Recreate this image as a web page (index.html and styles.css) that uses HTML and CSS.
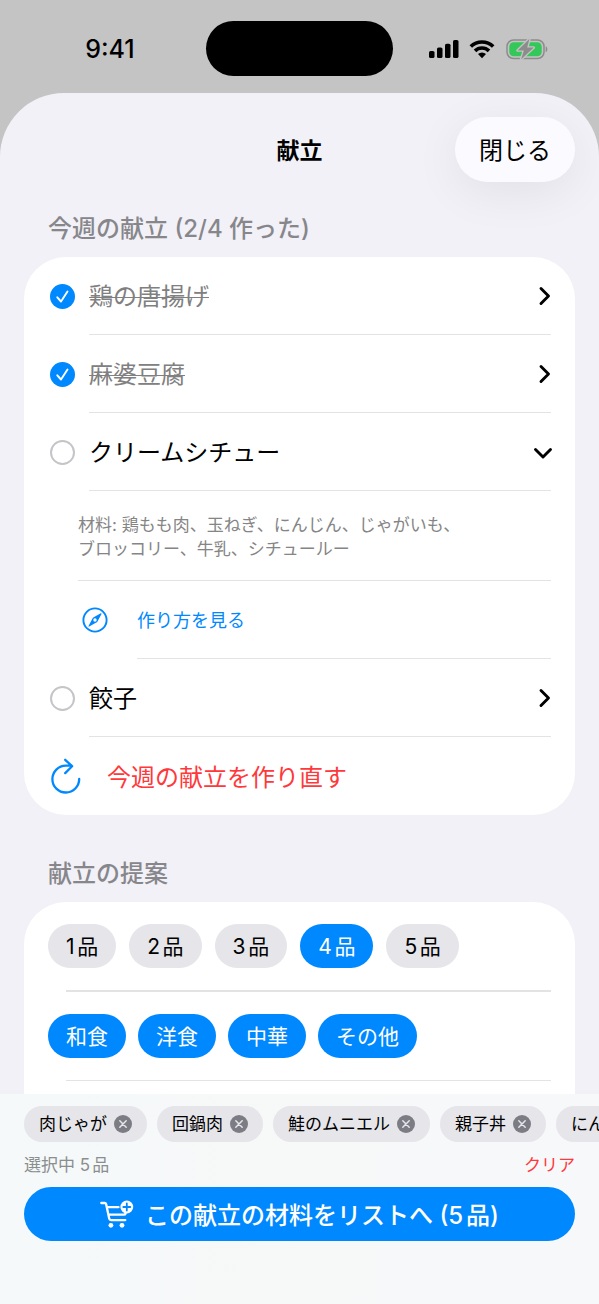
FILE: index.html
```html
<!DOCTYPE html>
<html lang="ja">
<head>
<meta charset="utf-8">
<meta name="viewport" content="width=device-width, initial-scale=1">
<title>献立</title>
<link rel="stylesheet" href="styles.css">
</head>
<body class="screen">
<div class="status">
  <div class="status-side"><span class="clock">9:41</span></div>
  <div class="island"></div>
  <div class="status-side status-icons">
    <svg width="30" height="20" viewBox="0 0 30 20" aria-hidden="true"><rect x="0" y="12" width="5.500" height="7" rx="1.6"/><rect x="8" y="8.500" width="5.500" height="10.500" rx="1.6"/><rect x="16" y="4.700" width="5.500" height="14.300" rx="1.6"/><rect x="24" y="1" width="5.500" height="18" rx="1.6"/></svg>
    <svg width="26" height="20" viewBox="0 0 26 20" aria-hidden="true"><g fill="none" stroke="#000" stroke-width="3.6"><path d="M1.800 7.500a16 16 0 0 1 22.400 0"/><path d="M6 11.900a10 10 0 0 1 14 0"/></g><path d="M13 19.200l-4-4.100a5.700 5.700 0 0 1 8 0z"/></svg>
    <svg class="battery" width="42" height="22" viewBox="0 0 42 22" aria-hidden="true"><rect x="1" y="2" width="37" height="18.500" rx="6.500" fill="none" stroke="#8c8c8c" stroke-width="1.500"/><rect x="3.300" y="4.300" width="32.400" height="14" rx="4.300" fill="#34c759"/><path d="M39.700 8.200c2.200.8 2.200 5.200 0 6z" fill="#8c8c8c"/><path d="M23.500 .8L11.600 12.500h6.300l-2.900 9L27.800 9.600h-6.600z" fill="#8c8c8c" stroke="#c4c4c4" stroke-width="2.600" stroke-linejoin="round" paint-order="stroke"/></svg>
  </div>
</div>

<main class="sheet">
  <header class="toolbar">
    <h1 class="title">献立</h1>
    <button class="close" type="button">閉じる</button>
  </header>

  <h2 class="section-title">今週の献立 (2/4 作った)</h2>
  <ul class="card">
    <li class="row">
      <input class="tick" type="checkbox" id="m1" checked>
      <div class="row-body"><label class="dish" for="m1">鶏の唐揚げ</label>
        <button class="toggle" type="button" aria-label="開く"><svg width="20" height="20" viewBox="0 0 20 20"><path d="M10 2.500l7.500 7.500-7.500 7.500"/></svg></button></div>
    </li>
    <li class="row">
      <input class="tick" type="checkbox" id="m2" checked>
      <div class="row-body"><label class="dish" for="m2">麻婆豆腐</label>
        <button class="toggle" type="button" aria-label="開く"><svg width="20" height="20" viewBox="0 0 20 20"><path d="M10 2.500l7.500 7.500-7.500 7.500"/></svg></button></div>
    </li>
    <li class="row">
      <input class="tick" type="checkbox" id="m3">
      <div class="row-body"><label class="dish" for="m3">クリームシチュー</label>
        <button class="toggle" type="button" aria-label="閉じる"><svg width="20" height="20" viewBox="0 0 20 20"><path d="M4.500 7.500l7.500 7.500 7.500-7.500"/></svg></button></div>
    </li>
    <li class="row row-note">
      <div class="row-body"><p class="note">材料: 鶏もも肉、玉ねぎ、にんじん、じゃがいも、<br>ブロッコリー、牛乳、シチュールー</p></div>
    </li>
    <li class="row row-link">
      <svg class="compass" width="26" height="26" viewBox="0 0 26 26" aria-hidden="true"><circle cx="13" cy="13" r="11.600" fill="none" stroke="#08f" stroke-width="1.900"/><path fill="#08f" fill-rule="evenodd" d="M19.500 7c.2-.5-.2-.9-.7-.7l-7.100 4c-.5.300-.9.700-1.200 1.200L6.500 18.900c-.2.500.2.900.7.700l7.100-4c.5-.3.900-.7 1.200-1.200zM13 11.300a1.700 1.700 0 1 1 0 3.400 1.700 1.700 0 0 1 0-3.400z"/></svg>
      <div class="row-body"><a class="recipe" href="#">作り方を見る</a></div>
    </li>
    <li class="row">
      <input class="tick" type="checkbox" id="m4">
      <div class="row-body"><label class="dish" for="m4">餃子</label>
        <button class="toggle" type="button" aria-label="開く"><svg width="20" height="20" viewBox="0 0 20 20"><path d="M10 2.500l7.500 7.500-7.500 7.500"/></svg></button></div>
    </li>
    <li class="row row-redo">
      <button class="redo" type="button">
        <svg width="30" height="36" viewBox="0 0 30 36" aria-hidden="true"><path d="M28.200 21A13.400 13.400 0 1 1 14.800 7.700h5.700M14.200 1.800l6.900 6.400-6.900 6.900" fill="none" stroke="#08f" stroke-width="2.300" stroke-linecap="round" stroke-linejoin="round"/></svg>
        <span class="redo-label">今週の献立を作り直す</span>
      </button>
    </li>
  </ul>

  <h2 class="section-title section-next">献立の提案</h2>
  <div class="card card-open">
    <div class="pills pills-count">
      <button class="pill" type="button">1品</button>
      <button class="pill" type="button">2品</button>
      <button class="pill" type="button">3品</button>
      <button class="pill pill-on" type="button" aria-pressed="true">4品</button>
      <button class="pill" type="button">5品</button>
    </div>
    <div class="pills">
      <button class="pill pill-on" type="button" aria-pressed="true">和食</button>
      <button class="pill pill-on" type="button" aria-pressed="true">洋食</button>
      <button class="pill pill-on" type="button" aria-pressed="true">中華</button>
      <button class="pill pill-on" type="button" aria-pressed="true">その他</button>
    </div>
  </div>
</main>

<footer class="tray">
  <div class="chips">
    <button class="chip" type="button">肉じゃが<svg class="remove" viewBox="0 0 18 18"><circle cx="9" cy="9" r="9"/><path d="M5.800 5.800l6.400 6.400M12.200 5.800l-6.400 6.400"/></svg></button>
    <button class="chip" type="button">回鍋肉<svg class="remove" viewBox="0 0 18 18"><circle cx="9" cy="9" r="9"/><path d="M5.800 5.800l6.400 6.400M12.200 5.800l-6.400 6.400"/></svg></button>
    <button class="chip" type="button">鮭のムニエル<svg class="remove" viewBox="0 0 18 18"><circle cx="9" cy="9" r="9"/><path d="M5.800 5.800l6.400 6.400M12.200 5.800l-6.400 6.400"/></svg></button>
    <button class="chip" type="button">親子丼<svg class="remove" viewBox="0 0 18 18"><circle cx="9" cy="9" r="9"/><path d="M5.800 5.800l6.400 6.400M12.200 5.800l-6.400 6.400"/></svg></button>
    <button class="chip" type="button">にん</button>
  </div>
  <div class="summary">
    <span>選択中 5品</span>
    <button class="clear" type="button">クリア</button>
  </div>
  <button class="add" type="button">
    <svg width="34" height="28" viewBox="0 0 34 28" aria-hidden="true"><path d="M1.300 3h3.500c.7 0 1.100.4 1.300 1l3.100 14.600c.2 1 .8 1.500 1.800 1.500h14.300M7.200 7.200h11.300M8.800 14.700h15c1 0 1.500-.4 1.800-1.200" fill="none" stroke="#fff" stroke-width="2.300" stroke-linecap="round" stroke-linejoin="round"/><circle cx="10.900" cy="25.300" r="2.400" fill="#fff"/><circle cx="22" cy="25.300" r="2.400" fill="#fff"/><circle cx="26.800" cy="7" r="6.400" fill="#fff"/><path d="M26.800 3.500v7M23.300 7h7" stroke="#08f" stroke-width="1.800" stroke-linecap="round"/></svg>
    <span class="add-label">この献立の材料をリストへ (5品)</span>
  </button>
</footer>
</body>
</html>
```
FILE: styles.css
```css
* { box-sizing: border-box; margin: 0; padding: 0; }

.screen {
  display: flex;
  flex-direction: column;
  height: 100vh;
  overflow: hidden;
  background: #c4c4c4;
  color: #000;
  font-family: Inter, "Noto Sans CJK JP", sans-serif;
  font-size: 24px;
  line-height: 30px;
  text-autospace: normal;
}

button {
  border: 0;
  background: none;
  color: inherit;
  font: inherit;
  white-space: nowrap;
  cursor: pointer;
}

/* Status bar */
.status {
  display: grid;
  grid-template-columns: 1fr 187px 1fr;
  align-items: center;
  height: 93px;
  flex: none;
  padding-top: 4px;
}
.status-side { display: flex; justify-content: center; align-items: center; }
.clock { font-size: 25px; font-weight: 500; padding-left: 14px; }
.island { height: 55px; border-radius: 28px; background: #000; }
.status-icons { gap: 10px; padding-right: 16px; }
.battery { margin-left: 1px; }

/* Sheet */
.sheet {
  flex: 1;
  min-height: 0;
  overflow: hidden;
  padding: 24px 24px 0;
  border-radius: 64px 64px 0 0;
  background: #f2f1f7;
}
.toolbar {
  display: grid;
  grid-template-columns: 1fr auto 1fr;
  align-items: center;
}
.title { grid-column: 2; padding-top: 2px; font-size: 23px; font-weight: 600; }
.close {
  justify-self: end;
  height: 65px;
  padding: 2px 24px 0;
  border-radius: 33px;
  background: #fbfaff;
  box-shadow: 0 10px 48px rgba(0, 0, 0, .07);
}
.section-title {
  margin-top: 32px;
  padding: 0 24px 13px;
  color: #87878b;
  font-size: 24px;
  font-weight: 500;
}
.section-next { margin-top: 44px; }

/* Cards */
.card {
  overflow: hidden;
  border-radius: 42px;
  background: #fff;
  list-style: none;
}
.card-open { padding-bottom: 96px; }
.row { display: flex; align-items: stretch; min-height: 78px; padding: 0 24px; }
.row-body {
  display: flex;
  flex: 1;
  align-items: center;
  justify-content: space-between;
  border-bottom: 1px solid #e3e3e4;
}
.dish, .recipe, .redo-label, .add-label { padding-top: 3px; }
.tick {
  appearance: none;
  align-self: center;
  width: 25px;
  height: 25px;
  margin: 0 14px 0 2px;
  border: 2px solid #c5c5c9;
  border-radius: 50%;
}
.tick:checked {
  border: 0;
  background: #08f url("data:image/svg+xml,%3Csvg xmlns='http://www.w3.org/2000/svg' viewBox='0 0 25 25'%3E%3Cpath d='M7.300 13.300l3.700 4.200 6.500-10' fill='none' stroke='white' stroke-width='1.900' stroke-linecap='round' stroke-linejoin='round'/%3E%3C/svg%3E");
}
.tick:checked + .row-body .dish {
  color: #808080;
  text-decoration: line-through;
  text-decoration-thickness: 1px;
}
.toggle { display: flex; }
.toggle svg {
  overflow: visible;
  fill: none;
  stroke: #000;
  stroke-width: 2.900;
  stroke-linecap: round;
  stroke-linejoin: round;
}
.row-note { min-height: 90px; padding-left: 54px; }
.note { padding-top: 2px; color: #858585; font-size: 17px; line-height: 24px; }
.row-link { padding-left: 58px; }
.compass { align-self: center; margin-right: 29px; }
.recipe { color: #08f; font-size: 18px; text-decoration: none; }
.redo { display: flex; align-items: center; gap: 26px; padding-left: 3px; color: #ff383c; }

.pills { display: flex; gap: 12px; padding: 22px 24px 23px; position: relative; }
.pills::after {
  content: "";
  position: absolute;
  right: 24px;
  bottom: 0;
  left: 42px;
  height: 1px;
  background: #e3e3e4;
}
.pills-count { gap: 13px; padding-bottom: 24px; }
.pills-count::after { height: 2px; }
.pill {
  height: 44px;
  padding: 1px 18px 0;
  border-radius: 22px;
  background: #e5e5ea;
  font-size: 21px;
}
.pill-on { background: #08f; color: #fff; }

/* Selection tray */
.tray {
  flex: none;
  padding: 12px 24px 63px;
  background: linear-gradient(90deg, #f5f9fa, #f7f8f8 50%, #f7f8fa);
}
.chips { display: flex; gap: 10px; margin-right: -24px; overflow: hidden; }
.chip {
  display: flex;
  flex: none;
  align-items: center;
  gap: 7px;
  height: 36px;
  padding: 0 15px;
  border-radius: 18px;
  background: #e5e5ea;
  font-size: 17px;
}
.remove { width: 18px; height: 18px; fill: #7c7c84; stroke-linecap: round; }
.remove path { stroke: #e5e5ea; stroke-width: 1.500; }
.summary {
  display: flex;
  justify-content: space-between;
  margin: 11px 0 10px;
  color: #8b8e8f;
  font-size: 17px;
  line-height: 24px;
}
.clear { color: #ff383c; }
.add {
  display: flex;
  align-items: center;
  justify-content: center;
  gap: 11px;
  width: 100%;
  height: 54px;
  border-radius: 27px;
  background: #08f;
  color: #fff;
  font-weight: 500;
}
```
